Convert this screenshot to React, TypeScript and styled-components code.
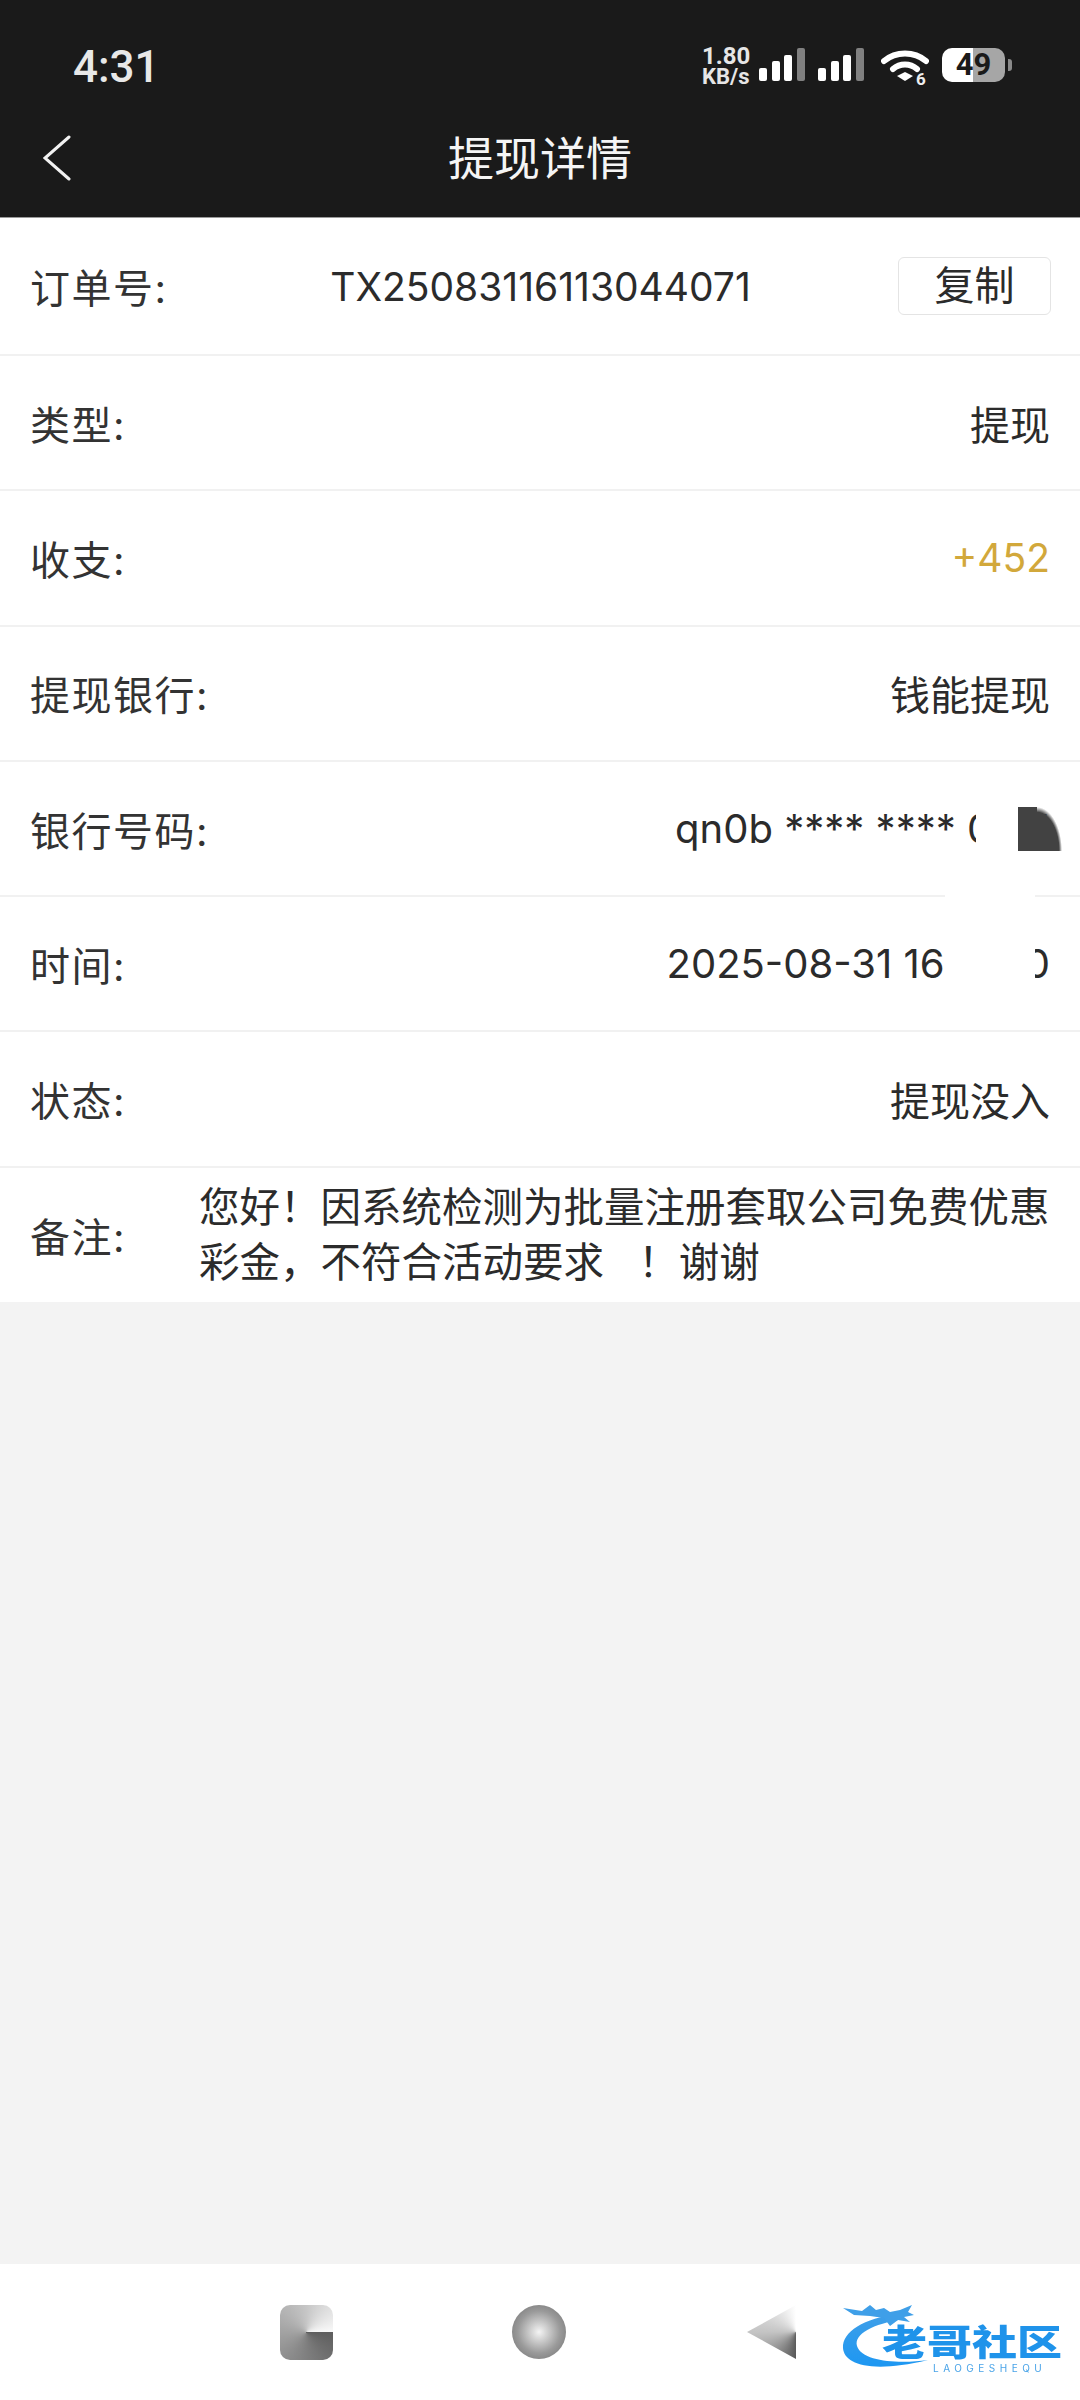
import React from "react";
import styled, { createGlobalStyle } from "styled-components";

const GlobalStyle = createGlobalStyle`
  html, body {
    margin: 0;
    padding: 0;
    background: #f3f3f3;
  }
  * {
    box-sizing: border-box;
  }
`;

const rows = [
  { label: "类型:", value: "提现" },
  { label: "收支:", value: "+452", gold: true, small: true },
  { label: "提现银行:", value: "钱能提现" },
  { label: "银行号码:", value: "qn0b **** **** 0011" },
  { label: "时间:", value: "2025-08-31 16:11:30" },
  { label: "状态:", value: "提现没入" },
];

const SignalBars = () => (
  <svg width="46" height="33" viewBox="0 0 46 33">
    <rect x="0" y="20" width="8" height="13" rx="2" fill="#fff" />
    <rect x="13" y="13" width="8" height="20" rx="2" fill="#fff" />
    <rect x="25" y="7" width="8" height="26" rx="2" fill="#fff" />
    <rect x="38" y="0" width="8" height="33" rx="2" fill="#808080" />
  </svg>
);

const WifiIcon = () => (
  <svg width="48" height="40" viewBox="0 0 48 40">
    <path d="M3 13 C15 3 33 3 45 13" fill="none" stroke="#fff" strokeWidth="6" strokeLinecap="round" />
    <path d="M12 21 C19 15 29 15 36 21" fill="none" stroke="#fff" strokeWidth="6" strokeLinecap="round" />
    <path d="M16 28 L24 24 L32 28 L24 33 Z" fill="#fff" />
    <text x="35" y="37" fontSize="17" fontWeight="700" fill="#eee" fontFamily="Roboto, sans-serif">6</text>
  </svg>
);

const Logo = () => (
  <svg width="90" height="75" viewBox="0 0 90 75">
    <defs>
      <linearGradient id="logoBlue" x1="0" y1="0" x2="0" y2="1">
        <stop offset="0" stopColor="#3f9fe8" />
        <stop offset="1" stopColor="#1d97f2" />
      </linearGradient>
    </defs>
    <path
      d="M58 12 C24 16 2 30 3 46 C4 62 30 72 88 58 C60 62 22 60 17 44 C14 32 32 22 64 17 Z"
      fill="url(#logoBlue)"
    />
    <path
      d="M3 6 L22 9 L30 3 L36 8 L44 6 L50 10 L60 8 L72 3 L68 10 L74 13 L64 15 L70 20 L58 18 L50 24 L44 16 L30 14 L14 13 Z"
      fill="#3f9fe8"
    />
  </svg>
);

const App = () => {
  return (
    <Page>
      <GlobalStyle />
      <Header>
        <StatusBar>
          <Clock>4:31</Clock>
          <StatusIcons>
            <NetSpeed>
              <span>1.80</span>
              <span>KB/s</span>
            </NetSpeed>
            <SignalBars />
            <SignalBars />
            <WifiGap>
              <WifiIcon />
            </WifiGap>
            <Battery>
              <BatteryLevel>49</BatteryLevel>
            </Battery>
            <BatteryNub />
          </StatusIcons>
        </StatusBar>
        <NavBar>
          <BackButton>
            <svg width="28" height="46" viewBox="0 0 28 46">
              <path d="M26 2 L2 23 L26 44" fill="none" stroke="#f2f2f2" strokeWidth="3" strokeLinecap="round" strokeLinejoin="miter" />
            </svg>
          </BackButton>
          <Title>提现详情</Title>
        </NavBar>
      </Header>

      <Sheet>
        <OrderRow>
          <Label>订单号:</Label>
          <OrderNumber>TX25083116113044071</OrderNumber>
          <CopyButton>复制</CopyButton>
        </OrderRow>
        {rows.map((row) => (
          <Row key={row.label}>
            <Label>{row.label}</Label>
            <Value $gold={row.gold} $small={row.small}>
              {row.value}
            </Value>
          </Row>
        ))}
        <RemarkRow>
          <Label>备注:</Label>
          <Remark>
            您好！因系统检测为批量注册套取公司免费优惠
            <br />
            彩金，不符合活动要求&nbsp;&nbsp;&nbsp;！谢谢
          </Remark>
        </RemarkRow>
        <BankMask />
        <TimeMask />
        <DarkBlot />
      </Sheet>

      <Filler />

      <BottomBar>
        <NavSquare />
        <NavCircle />
        <NavTriangle />
        <Watermark>
          <Logo />
          <WatermarkName>老哥社区</WatermarkName>
          <WatermarkSub>LAOGESHEQU</WatermarkSub>
        </Watermark>
      </BottomBar>
    </Page>
  );
};
export default App;

const Page = styled.div`
  width: 1080px;
  height: 2400px;
  display: flex;
  flex-direction: column;
  overflow: hidden;
  background: #f3f3f3;
  font-family: Inter, "Noto Sans CJK SC", sans-serif;
  color: #2b2b2b;
`;

const Header = styled.header`
  height: 218px;
  background: #1a1a1a;
  color: #f2f2f2;
  border-bottom: 1px solid #9a9a9a;
`;

const StatusBar = styled.div`
  height: 90px;
  padding: 46px 68px 0 73px;
  display: flex;
  justify-content: space-between;
  align-items: flex-start;
`;

const Clock = styled.div`
  font-family: Roboto, sans-serif;
  font-size: 44px;
  line-height: 42px;
  font-weight: 500;
  color: #e8e8e8;
`;

const StatusIcons = styled.div`
  display: flex;
  align-items: flex-start;
  margin-top: 2px;
  gap: 13px;
`;

const NetSpeed = styled.div`
  display: flex;
  flex-direction: column;
  width: 50px;
  margin: -3px -6px 0 -4px;
  font-family: Roboto, sans-serif;
  font-size: 22px;
  line-height: 19px;
  font-weight: 700;
  color: #e6e6e6;
  white-space: nowrap;
  span:first-child {
    font-size: 24px;
    line-height: 22px;
  }
`;

const WifiGap = styled.div`
  margin-left: 4px;
`;

const Battery = styled.div`
  width: 63px;
  height: 34px;
  border-radius: 10px;
  background: linear-gradient(90deg, #fff 0 50%, #a6a6a6 50% 100%);
  display: flex;
  align-items: center;
  justify-content: center;
`;

const BatteryLevel = styled.span`
  font-family: Roboto, sans-serif;
  font-size: 31px;
  line-height: 34px;
  font-weight: 700;
  color: #1a1a1a;
`;

const BatteryNub = styled.div`
  width: 4px;
  height: 12px;
  margin: 11px 0 0 -10px;
  border-radius: 0 3px 3px 0;
  background: #8a8a8a;
`;

const NavBar = styled.div`
  height: 127px;
  position: relative;
  display: flex;
  align-items: center;
  justify-content: center;
`;

const BackButton = styled.div`
  position: absolute;
  left: 43px;
  top: 45px;
  line-height: 0;
`;

const Title = styled.h1`
  margin: 9px 0 0;
  font-size: 46px;
  line-height: 60px;
  font-weight: 400;
  color: #f5f5f5;
`;

const Sheet = styled.main`
  position: relative;
  background: #fff;
`;

const Row = styled.div`
  height: 135.3px;
  padding: 0 30px;
  display: flex;
  align-items: center;
  justify-content: space-between;
  border-bottom: 2px solid #f1f1f1;
  font-size: 40px;
`;

const OrderRow = styled(Row)`
  height: 138px;
  padding-right: 29px;
  display: grid;
  grid-template-columns: 1fr auto 1fr;
`;

const Label = styled.span`
  font-size: 40px;
  letter-spacing: 1.5px;
  color: #333;
  white-space: nowrap;
`;

const Value = styled.span<{ $gold?: boolean; $small?: boolean }>`
  font-size: ${(p) => (p.$small ? "39px" : "40px")};
  color: ${(p) => (p.$gold ? "#d2a83b" : "#2b2b2b")};
  white-space: nowrap;
`;

const OrderNumber = styled.span`
  font-size: 39px;
  color: #2b2b2b;
`;

const CopyButton = styled.button`
  justify-self: end;
  width: 153px;
  height: 58px;
  padding: 0;
  background: #fff;
  border: 1px solid #e4e4e4;
  border-radius: 6px;
  font: inherit;
  font-size: 40px;
  line-height: 54px;
  color: #2b2b2b;
`;

const RemarkRow = styled.div`
  height: 134px;
  padding: 0 30px;
  display: flex;
  align-items: center;
  gap: 73px;
`;

const Remark = styled.div`
  font-size: 40.5px;
  line-height: 55px;
  color: #2b2b2b;
  white-space: nowrap;
`;

const BankMask = styled.div`
  position: absolute;
  left: 976px;
  top: 582px;
  width: 42px;
  height: 90px;
  background: #fff;
`;

const TimeMask = styled.div`
  position: absolute;
  left: 945px;
  top: 670px;
  width: 90px;
  height: 140px;
  background: #fff;
`;

const DarkBlot = styled.div`
  position: absolute;
  left: 1018px;
  top: 589px;
  width: 44px;
  height: 44px;
  background:
    linear-gradient(#424242, #424242) 0 0 / 19px 100% no-repeat,
    radial-gradient(ellipse 25px 44px at 19px 100%, #424242 88%, rgba(66, 66, 66, 0) 100%);
`;

const Filler = styled.div`
  flex: 1;
  background: #f3f3f3;
`;

const BottomBar = styled.nav`
  height: 136px;
  position: relative;
  background: #fff;
  display: flex;
  align-items: center;
  padding-left: 280px;
`;

const NavSquare = styled.div`
  width: 53px;
  height: 55px;
  border-radius: 10px;
  background: conic-gradient(from 90deg at 50% 50%, #5e5e5e 0deg, #8a8a8a 120deg, #c6c6c6 270deg, #fafafa 360deg);
`;

const NavCircle = styled.div`
  width: 54px;
  height: 54px;
  margin-left: 179px;
  border-radius: 50%;
  background: radial-gradient(circle, #f4f4f4 0%, #9a9a9a 55%, #6c6c6c 100%);
`;

const NavTriangle = styled.div`
  width: 49px;
  height: 54px;
  margin-left: 181px;
  clip-path: polygon(100% 0, 0 50%, 100% 100%);
  background: conic-gradient(from 180deg at 100% 50%, #5a5a5a 0deg, #c4c4c4 90deg, #fff 180deg, #fff 360deg);
`;

const Watermark = styled.div`
  position: absolute;
  left: 840px;
  top: 38px;
  width: 230px;
  height: 75px;
  filter: blur(0.7px);
`;

const WatermarkName = styled.div`
  position: absolute;
  left: 42px;
  top: 23px;
  font-size: 45px;
  line-height: 36px;
  font-weight: 900;
  white-space: nowrap;
  color: #1f93ea;
  transform: scaleY(0.8);
`;

const WatermarkSub = styled.div`
  position: absolute;
  left: 93px;
  top: 60px;
  font-size: 10px;
  line-height: 12px;
  letter-spacing: 4.5px;
  color: #4aa4e8;
  white-space: nowrap;
`;
